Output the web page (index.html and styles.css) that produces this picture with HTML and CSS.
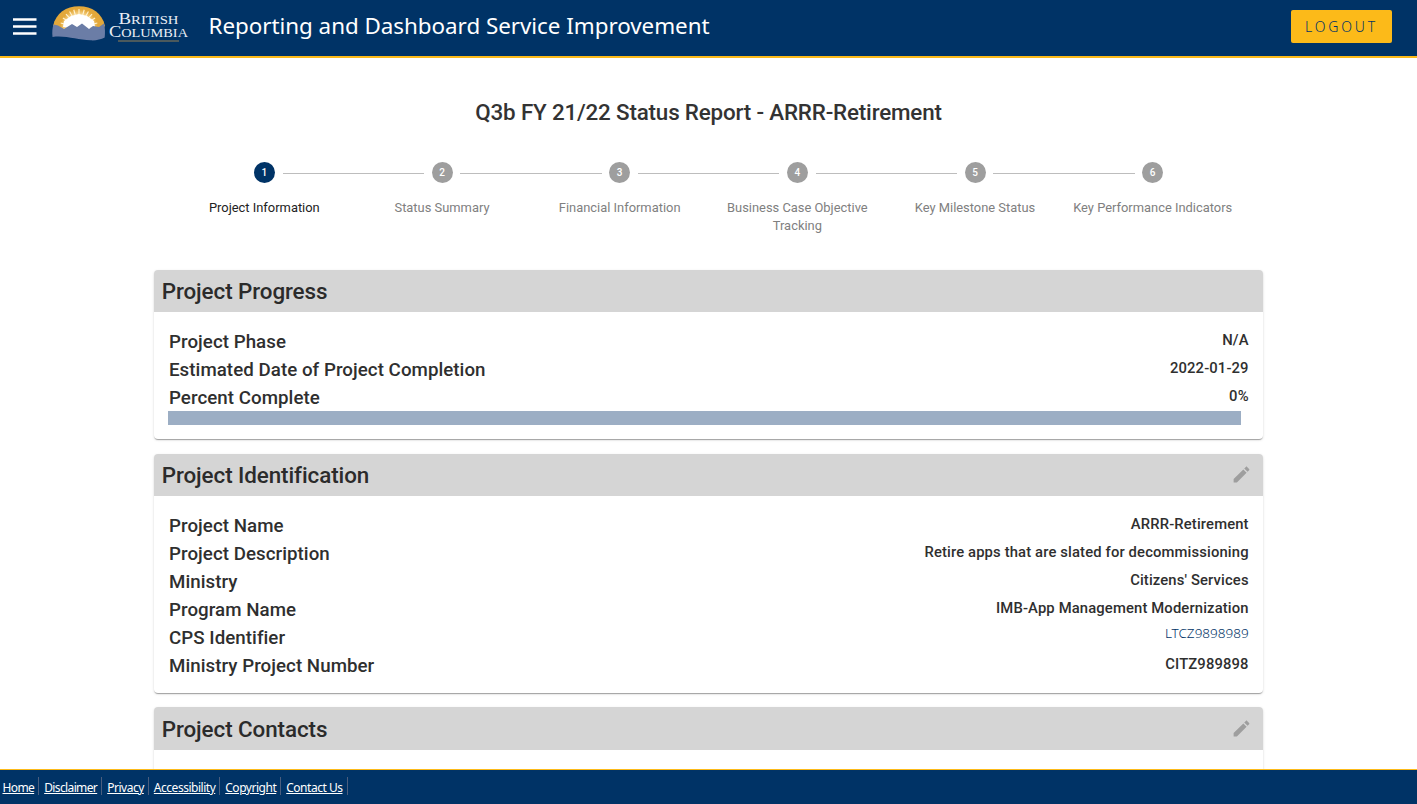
FILE: index.html
```
<!DOCTYPE html>
<html lang="en">
<head>
<meta charset="utf-8">
<title>Reporting and Dashboard Service Improvement</title>
<link rel="stylesheet" href="styles.css">
</head>
<body>
<header class="topbar">
  <svg class="menu" width="24" height="18" viewBox="0 0 24 18"><path d="M0 1.500h23.500M0 8.500h23.500M0 15.500h23.500" stroke="#fff" stroke-width="2.300"/></svg>
  <svg class="logo" width="138" height="40" viewBox="0 0 138 40">
    <defs>
      <clipPath id="dome"><path d="M1 20C4 7 14 .3 27 .3S50 7 53 20l-8 8H8z"/></clipPath>
      <radialGradient id="sun" cx="27" cy="22" r="25" gradientUnits="userSpaceOnUse"><stop offset=".42" stop-color="#fff"/><stop offset=".56" stop-color="#f6d48a"/><stop offset=".75" stop-color="#e3a83a"/></radialGradient>
    </defs>
    <g clip-path="url(#dome)">
      <path d="M0 0h54v30H0z" fill="url(#sun)"/>
      <path d="M27 22L0 14.500M27 22L3 7M27 22L9 3M27 22L15 1M27 22L21 1M27 22L27 3M27 22L33 1M27 22L39 1M27 22L45 3M27 22L51 7M27 22L54 14.500" stroke="#fff3d2" stroke-width="1.100" stroke-dasharray="19 20"/>
      <path d="M11 21l1-6 7-5 8-2 8 2 7 5 1 6z" fill="#fff"/>
    </g>
    <path d="M.5 31C0 26 .3 22 1.500 18.500L6 19.500l6 3.500 8-5 5 3 5-3.500 7 5.500 4-3 6 1 5-3.500c1.200 4.500 1.200 9.500.7 14-4 2-9 3.200-14.200 2.800C26 34 13 29 .5 31z" fill="#6b7da6"/>
    <g class="logo-text">
      <text x="66.500" y="18" textLength="60" lengthAdjust="spacingAndGlyphs"><tspan class="cap">B</tspan>RITISH</text>
      <text x="57" y="31" textLength="79" lengthAdjust="spacingAndGlyphs"><tspan class="cap">C</tspan>OLUMBIA</text>
    </g>
    <path d="M66 35h61" stroke="#65675a" stroke-width="1.500"/>
  </svg>
  <div class="app-title">Reporting and Dashboard Service Improvement</div>
  <button class="logout">LOGOUT</button>
</header>
<main class="content">
  <h1 class="report-title">Q3b FY 21/22 Status Report - ARRR-Retirement</h1>
  <ol class="stepper">
    <li class="step active"><span class="dot">1</span><span class="step-label">Project Information</span></li>
    <li class="step"><span class="dot">2</span><span class="step-label">Status Summary</span></li>
    <li class="step"><span class="dot">3</span><span class="step-label">Financial Information</span></li>
    <li class="step"><span class="dot">4</span><span class="step-label">Business Case Objective Tracking</span></li>
    <li class="step"><span class="dot">5</span><span class="step-label">Key Milestone Status</span></li>
    <li class="step"><span class="dot">6</span><span class="step-label">Key Performance Indicators</span></li>
  </ol>
  <section class="card">
    <div class="card-head"><h2>Project Progress</h2></div>
    <div class="card-body">
      <div class="row"><span class="label">Project Phase</span><span class="value">N/A</span></div>
      <div class="row"><span class="label">Estimated Date of Project Completion</span><span class="value">2022-01-29</span></div>
      <div class="row"><span class="label">Percent Complete</span><span class="value">0%</span></div>
      <div class="progress"></div>
    </div>
  </section>
  <section class="card">
    <div class="card-head"><h2>Project Identification</h2><svg class="edit" viewBox="0 0 24 24"><path d="M3 17.250V21h3.750L17.810 9.940l-3.750-3.750L3 17.250zM20.710 7.040c.39-.39.39-1.020 0-1.410l-2.340-2.340c-.39-.39-1.020-.39-1.410 0l-1.830 1.830 3.750 3.750 1.830-1.830z"/></svg></div>
    <div class="card-body">
      <div class="row"><span class="label">Project Name</span><span class="value">ARRR-Retirement</span></div>
      <div class="row"><span class="label">Project Description</span><span class="value">Retire apps that are slated for decommissioning</span></div>
      <div class="row"><span class="label">Ministry</span><span class="value">Citizens' Services</span></div>
      <div class="row"><span class="label">Program Name</span><span class="value">IMB-App Management Modernization</span></div>
      <div class="row"><span class="label">CPS Identifier</span><a class="link">LTCZ9898989</a></div>
      <div class="row"><span class="label">Ministry Project Number</span><span class="value">CITZ989898</span></div>
    </div>
  </section>
  <section class="card">
    <div class="card-head"><h2>Project Contacts</h2><svg class="edit" viewBox="0 0 24 24"><path d="M3 17.250V21h3.750L17.810 9.940l-3.750-3.750L3 17.250zM20.710 7.040c.39-.39.39-1.020 0-1.410l-2.340-2.340c-.39-.39-1.020-.39-1.410 0l-1.830 1.830 3.750 3.750 1.830-1.830z"/></svg></div>
    <div class="card-body tall"></div>
  </section>
</main>
<footer class="footer">
  <a>Home</a><a>Disclaimer</a><a>Privacy</a><a>Accessibility</a><a>Copyright</a><a>Contact Us</a>
</footer>
</body>
</html>
```
FILE: styles.css
```
* { box-sizing: border-box; }
body {
  margin: 0;
  height: 804px;
  display: flex;
  flex-direction: column;
  overflow: hidden;
  background: #fff;
  font-family: Roboto, "Liberation Sans", sans-serif;
}
.topbar {
  flex: none;
  height: 58px;
  display: flex;
  align-items: flex-start;
  background: #036;
  border-bottom: 2px solid #fcba19;
  padding: 0 25px 0 13px;
}
.menu { margin-top: 18px; flex: none; }
.logo { margin: 6px 0 0 15px; flex: none; }
.logo-text { font: 12.5px "Liberation Serif", serif; fill: #e9eef5; }
.cap { font-size: 16px; }
.app-title {
  margin-left: 18.5px;
  font: 22.4px/52px "Noto Sans", sans-serif;
  letter-spacing: -.03px;
  color: #fff;
  white-space: nowrap;
}
.logout {
  margin: 10px 0 0 auto;
  width: 101px;
  height: 33px;
  padding: 0;
  border: 0;
  border-radius: 2px;
  background: #fcba19;
  color: #036;
  font: 300 14px "Noto Sans", sans-serif;
  letter-spacing: 2.8px;
}
.content {
  flex: 1;
  min-height: 0;
  overflow: hidden;
  padding: 0 154px;
}
.report-title {
  margin: 38px 0 34px;
  text-align: center;
  font-size: 22.4px;
  font-weight: 500;
  line-height: 32px;
  letter-spacing: -.18px;
  color: #333;
}
.stepper {
  list-style: none;
  display: flex;
  width: 1066px;
  height: 107.9px;
  margin: 0 auto;
  padding: 0;
}
.step {
  flex: 1;
  position: relative;
  display: flex;
  flex-direction: column;
  align-items: center;
  color: #808080;
}
.step + .step::before {
  content: "";
  position: absolute;
  top: 11px;
  left: calc(-50% + 18.150px);
  right: calc(50% + 18px);
  height: 1px;
  background: #bdbdbd;
}
.dot {
  width: 21px;
  height: 21px;
  border-radius: 50%;
  background: #9e9e9e;
  color: #fff;
  font-size: 10px;
  font-weight: 500;
  line-height: 21px;
  text-align: center;
}
.active .dot { background: #036; }
.active { color: #222; }
.step-label {
  margin-top: 16px;
  width: 168px;
  text-align: center;
  font-size: 12.9px;
  line-height: 18px;
}
.card {
  margin-bottom: 14.7px;
  border-radius: 4px;
  overflow: hidden;
  box-shadow: 0 2px 1px -1px rgba(0,0,0,.2), 0 1px 1px rgba(0,0,0,.14), 0 1px 3px rgba(0,0,0,.12);
}
.card-head {
  height: 42.5px;
  display: flex;
  align-items: center;
  justify-content: space-between;
  padding: 0 10.700px 0 7.700px;
  background: #d5d5d5;
}
.card-head h2 {
  margin: 0;
  font-size: 22.4px;
  font-weight: 500;
  line-height: 42px;
  letter-spacing: -.08px;
  color: #2b2b2b;
}
.card:last-child h2 { padding-top: 1.6px; }
.edit { width: 21px; height: 21px; fill: #9e9e9e; }
.card-body { padding: 15px 15px 13.5px; }
.tall { height: 120px; }
.row {
  height: 28px;
  display: flex;
  justify-content: space-between;
  color: #2f2f2f;
}
.label { font-size: 18.72px; font-weight: 500; line-height: 31px; letter-spacing: .05px; }
.value { font-size: 14.8px; font-weight: 500; line-height: 26px; letter-spacing: .14px; margin-right: -.7px; }
.link { font: 300 13.5px/20px "Noto Sans", sans-serif; color: #036; margin-right: -.6px; }
.progress {
  width: 1073px;
  height: 14px;
  margin-left: -1px;
  background: #9caec4;
}
.footer {
  flex: none;
  height: 35px;
  display: flex;
  align-items: flex-start;
  padding: 7px 0 0 2.500px;
  background: #036;
  border-top: 1px solid #fcba19;
  font: 12px/18px "Noto Sans", sans-serif;
}
.footer a {
  color: #fff;
  text-decoration: underline;
  border-right: 1px solid #4b5e7e;
  height: 18px;
  line-height: 21px;
  padding-right: 4.200px;
  margin-right: 4.800px;
  letter-spacing: -.48px;
}
.footer a:nth-child(-n+2) { letter-spacing: -.62px; }
```
